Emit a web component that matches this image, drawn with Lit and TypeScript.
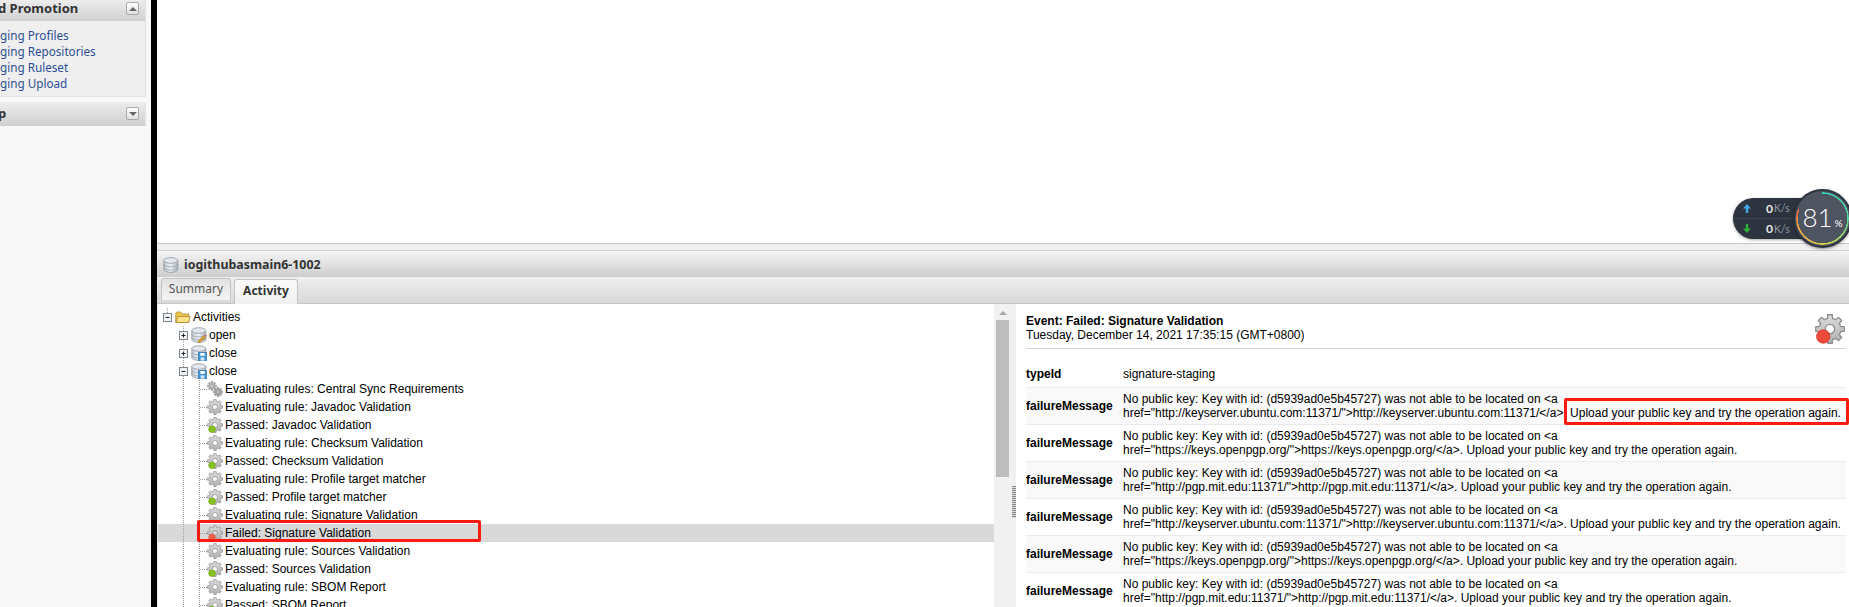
import { LitElement, html, css, svg } from 'lit';
import { customElement } from 'lit/decorators.js';

// gear outline, built from data so both sizes share one shape
function gearPath(cx: number, cy: number, outer: number, root: number, hole: number, teeth = 8) {
  const pts: string[] = [];
  const step = (Math.PI * 2) / teeth;
  for (let i = 0; i < teeth; i++) {
    const a = i * step;
    const corners: [number, number][] = [
      [root, a - step * 0.5],
      [root, a - step * 0.3],
      [outer, a - step * 0.2],
      [outer, a + step * 0.2],
      [root, a + step * 0.3],
    ];
    corners.forEach(([r, t]) => pts.push(`${(cx + r * Math.cos(t)).toFixed(2)} ${(cy + r * Math.sin(t)).toFixed(2)}`));
  }
  const ring = `M${cx - hole} ${cy}a${hole} ${hole} 0 1 0 ${hole * 2} 0a${hole} ${hole} 0 1 0 ${-hole * 2} 0Z`;
  return `M${pts.join('L')}Z${ring}`;
}

const gearDefs = html`
  <svg width="0" height="0" style="position:absolute">
    <defs>
      <linearGradient id="gearFill" x1="0" y1="0" x2="0" y2="1">
        <stop offset="0" stop-color="#dcdcdc"></stop>
        <stop offset="1" stop-color="#b0b0b0"></stop>
      </linearGradient>
      <linearGradient id="dbFill" x1="0" y1="0" x2="1" y2="0">
        <stop offset="0" stop-color="#c4ccd4"></stop>
        <stop offset="0.5" stop-color="#eef1f4"></stop>
        <stop offset="1" stop-color="#aab3bc"></stop>
      </linearGradient>
    </defs>
  </svg>
`;

const gearShape = svg`<path d=${gearPath(8, 8, 7.7, 5.8, 2.5)} fill="url(#gearFill)" fill-rule="evenodd" stroke="#8d8d8d" stroke-width="0.7"></path>`;

function gearIcon(badge?: string) {
  return html`<svg class="icon" width="16" height="16" viewBox="0 0 16 16">
    ${gearShape}
    ${badge ? svg`<circle cx="5" cy="12.2" r="3.5" fill=${badge} stroke-width="0.5" stroke="rgba(0,0,0,.15)"></circle>` : ''}
  </svg>`;
}

const gearsIcon = html`<svg class="icon" width="16" height="16" viewBox="0 0 16 16">
  <path d=${gearPath(5, 5, 4.6, 3.3, 1.3)} fill="#b4b4b4" fill-rule="evenodd" stroke="#858585" stroke-width="0.6"></path>
  <path d=${gearPath(11, 11, 4.6, 3.3, 1.3)} fill="#a8a8a8" fill-rule="evenodd" stroke="#777" stroke-width="0.6"></path>
</svg>`;

const dbShape = svg`
  <path d="M.8 3.5v9c0 1.6 3 2.8 7 2.8s7-1.2 7-2.8v-9z" fill="url(#dbFill)" stroke="#8f99a3" stroke-width="0.8"></path>
  <ellipse cx="7.8" cy="3.5" rx="7" ry="2.8" fill="#e4e8ec" stroke="#8f99a3" stroke-width="0.8"></ellipse>
  <path d="M.8 7c0 1.6 3 2.8 7 2.8s7-1.2 7-2.8M.8 10.2c0 1.6 3 2.8 7 2.8s7-1.2 7-2.8" fill="none" stroke="#8f99a3" stroke-width="0.7"></path>
`;

const dbEdit = html`<svg class="icon" width="16" height="16" viewBox="0 0 16 16">
  ${dbShape}
  <path d="M14.2 7.5l1.5 1.5-6.5 6.2-2.2.6.6-2.2z" fill="#e9a62c" stroke="#8a6420" stroke-width="0.5"></path>
  <path d="M14.2 7.5l1.5 1.5-1 1-1.5-1.5z" fill="#c77fc0"></path>
</svg>`;

const dbSave = html`<svg class="icon" width="16" height="16" viewBox="0 0 16 16">
  ${dbShape}
  <rect x="7.5" y="7.5" width="8" height="8.5" fill="#3f94d6" stroke="#1f6aa8" stroke-width="0.6"></rect>
  <rect x="9.3" y="8" width="4.4" height="2.8" fill="#fff"></rect>
  <rect x="9.6" y="12.4" width="3.8" height="3.2" fill="#d5e8f6"></rect>
</svg>`;

const folderIcon = html`<svg class="icon" width="16" height="16" viewBox="0 0 16 16">
  <path d="M.8 4V13.5h13V5H7L5.6 3H1.8z" fill="#efc74f" stroke="#a8862a" stroke-width="0.8"></path>
  <path d="M2.8 7.5h12.4l-1.6 6H.9z" fill="#fbe28a" stroke="#a8862a" stroke-width="0.8"></path>
</svg>`;

// one 16x18 cell of the tree's guide lines
function cell(kind: 'blank' | 'line' | 'elbow' | 'plus' | 'minus' | 'root') {
  const vLine = kind === 'line' || kind === 'elbow' || kind === 'plus' || kind === 'minus';
  const box = kind === 'plus' || kind === 'minus' || kind === 'root';
  return html`<svg class="cell" width="16" height="18" viewBox="0 0 16 18">
    ${vLine ? svg`<path d="M7.5 0V18" fill="none" stroke="#a0a0a0" stroke-dasharray="1 1"></path>` : ''}
    ${kind === 'root' ? svg`<path d="M7.5 0V5" fill="none" stroke="#a0a0a0" stroke-dasharray="1 1"></path>` : ''}
    ${kind === 'elbow' ? svg`<path d="M8 9.5H16" fill="none" stroke="#a0a0a0" stroke-dasharray="1 1"></path>` : ''}
    ${box ? svg`<rect x="3.5" y="5.5" width="8" height="8" fill="#f2f2f2" stroke="#7b8794"></rect>
      <path d="M5.5 9.5h4" stroke="#223" fill="none"></path>` : ''}
    ${kind === 'plus' ? svg`<path d="M7.5 7.5v4" stroke="#223" fill="none"></path>` : ''}
  </svg>`;
}

const GREEN = '#86c21e';
const RED = '#f4624f';

const ruleNames = ['Javadoc Validation', 'Checksum Validation', 'Profile target matcher', 'Signature Validation'];

const failureLinks = [
  'http://keyserver.ubuntu.com:11371/',
  'https://keys.openpgp.org/',
  'http://pgp.mit.edu:11371/',
  'http://keyserver.ubuntu.com:11371/',
  'https://keys.openpgp.org/',
  'http://pgp.mit.edu:11371/',
];

@customElement('app-root')
export class AppRoot extends LitElement {
  static styles = css`
    :host {
      display: block;
      position: relative;
      width: 1849px;
      height: 607px;
      overflow: hidden;
      background: #fff;
      font-family: 'Liberation Sans', Arial, sans-serif;
      font-size: 12px;
      color: #000;
    }
    .page {
      display: flex;
      height: 607px;
    }

    /* left navigation, scrolled off the left edge */
    .side {
      width: 151px;
      flex: none;
      background: #f8f8f8;
      overflow: hidden;
      font-family: 'Noto Sans', sans-serif;
    }
    .side-panel {
      width: 146px;
      margin-bottom: 5px;
      border-right: 1px solid #e2e2e2;
      box-sizing: border-box;
    }
    .side-head {
      height: 21px;
      display: flex;
      align-items: flex-start;
      justify-content: space-between;
      box-sizing: border-box;
      padding: 2px 6px 0 0;
      background: linear-gradient(#ededed, #cfcfcf);
      font-size: 13px;
      font-weight: 700;
      color: #333;
    }
    .side-head.help {
      height: 24px;
      padding-top: 5px;
    }
    .side-head span {
      margin: -3px 0 0 -2px;
    }
    .toggle {
      width: 13px;
      height: 13px;
      box-sizing: border-box;
      border: 1px solid #aaa;
      border-radius: 2px;
      background: linear-gradient(#fff, #e0e0e0);
      display: flex;
      align-items: center;
      justify-content: center;
    }
    .up,
    .down {
      width: 0;
      height: 0;
      border-left: 4px solid transparent;
      border-right: 4px solid transparent;
    }
    .up {
      border-bottom: 4px solid #666;
    }
    .down {
      border-top: 4px solid #666;
    }
    .side-body {
      height: 76px;
      box-sizing: border-box;
      padding-top: 6px;
      background: #efefef;
      border-bottom: 1px solid #e2e2e2;
    }
    .side-body a {
      display: block;
      height: 16px;
      line-height: 16px;
      font-size: 11.7px;
      color: #2c4f96;
      white-space: nowrap;
    }

    .rail {
      width: 6px;
      flex: none;
      background: #000;
    }

    .main {
      flex: 1;
      min-width: 0;
      display: flex;
      flex-direction: column;
    }
    .canvas {
      height: 243px;
      flex: none;
      background: #fff;
    }
    .split {
      height: 6px;
      flex: none;
      background: #f0f0f0;
      border-top: 1px solid #c8c8c8;
    }
    .title {
      height: 27px;
      flex: none;
      box-sizing: border-box;
      display: flex;
      align-items: center;
      gap: 5px;
      padding-left: 6px;
      border-top: 1px solid #d0d0d0;
      background: linear-gradient(#f5f5f5, #cdcdcd);
      font-family: 'Noto Sans', sans-serif;
      font-size: 12.4px;
      font-weight: 700;
      color: #333;
    }
    .title .icon {
      margin-top: 1px;
    }
    .tabs {
      height: 27px;
      flex: none;
      box-sizing: border-box;
      display: flex;
      align-items: flex-end;
      gap: 3px;
      padding-left: 4px;
      border-bottom: 1px solid #c8c8c8;
      background: linear-gradient(#efefef, #d8d8d8);
      font-family: 'Noto Sans', sans-serif;
      font-size: 12px;
    }
    .tab {
      height: 22px;
      width: 70px;
      margin-bottom: 3px;
      box-sizing: border-box;
      border: 1px solid #c4c4c4;
      border-bottom: 0;
      border-radius: 3px 3px 0 0;
      background: linear-gradient(#e2e2e2, #f4f4f4);
      color: #555;
      line-height: 20px;
      text-align: center;
    }
    .tab.on {
      height: 25px;
      width: 64px;
      margin-bottom: -1px;
      background: linear-gradient(#fafafa, #f0f0f0);
      color: #333;
      font-weight: 700;
      line-height: 22px;
    }

    .panes {
      flex: 1;
      min-height: 0;
      display: flex;
      border-left: 1px solid #eee;
    }
    .tree {
      flex: 1;
      min-width: 0;
      padding: 4px 0 0;
      overflow: hidden;
    }
    .row {
      display: flex;
      align-items: center;
      height: 18px;
      padding-left: 2px;
      white-space: nowrap;
      color: #000;
    }
    .row.sel {
      background: #d9d9d9;
    }
    .cell {
      flex: none;
      display: block;
    }
    .icon {
      flex: none;
      display: block;
    }
    .row .icon {
      margin-left: -1px;
      margin-right: 2px;
    }

    .scroll {
      width: 17px;
      flex: none;
      box-sizing: border-box;
      padding: 7px 2px 0;
      background: #f1f1f1;
    }
    .scroll .up {
      margin: 0 auto 5px;
      border-bottom-color: #a8a8a8;
    }
    .thumb {
      height: 157px;
      background: #bdbdbd;
    }
    .splitter {
      width: 5px;
      flex: none;
      box-sizing: border-box;
      padding-top: 182px;
      background: #f0f0f0;
    }
    .grip {
      width: 4px;
      height: 32px;
      margin-left: 1px;
      background: repeating-linear-gradient(#8a8a8a 0 1px, #d8d8d8 1px 2px);
    }

    .detail {
      width: 833px;
      flex: none;
      box-sizing: border-box;
      padding: 10px 3px 0 10px;
      background: #fff;
      overflow: hidden;
    }
    .event {
      display: flex;
      justify-content: space-between;
      height: 34px;
      border-bottom: 1px solid #d4d4d4;
    }
    .event b,
    .event span {
      display: block;
      line-height: 14px;
    }
    .big-gear {
      margin: 0 1px 0 0;
    }
    .props {
      margin-top: 12px;
    }
    .prop {
      display: flex;
      align-items: center;
      box-sizing: border-box;
      border-bottom: 1px solid #ebebeb;
      padding: 4px 0;
    }
    .prop.type {
      height: 27px;
    }
    .prop.alt {
      background: #f9f9f9;
    }
    .prop b {
      width: 97px;
      flex: none;
    }
    .prop span {
      display: block;
      line-height: 14px;
      white-space: nowrap;
    }

    /* red annotations drawn on top of the screenshot */
    .mark {
      position: absolute;
      box-sizing: border-box;
      border: 3px solid #ff1a10;
      border-radius: 2px;
    }
    .mark.tree-mark {
      left: 197px;
      top: 520px;
      width: 284px;
      height: 22px;
    }
    .mark.msg-mark {
      left: 1564px;
      top: 398px;
      width: 285px;
      height: 27px;
    }

    /* floating network meter */
    .meter {
      position: absolute;
      left: 1733px;
      top: 198px;
      width: 90px;
      height: 41px;
      border-radius: 21px;
      background: #2e343f;
      box-shadow: 0 1px 3px rgba(0, 0, 0, 0.35);
      font-family: Lato, sans-serif;
    }
    .meter-row {
      display: flex;
      align-items: center;
      height: 20px;
      box-sizing: border-box;
      padding-left: 10px;
      color: #e8e8e8;
    }
    .meter-row + .meter-row {
      border-top: 1px solid #3d434f;
    }
    .meter-row svg {
      flex: none;
    }
    .meter-row b {
      margin-left: 15px;
      font-size: 12px;
      width: 7px;
    }
    .meter-row i {
      margin-left: 1px;
      font-style: normal;
      font-size: 10.5px;
      color: #8f96a3;
    }
    .dial {
      position: absolute;
      left: 1793px;
      top: 189px;
      width: 59px;
      height: 59px;
      border-radius: 50%;
      background: #4f5461;
      border: 2px solid #2e343f;
      box-sizing: border-box;
      box-shadow: 0 1px 3px rgba(0, 0, 0, 0.4);
      display: flex;
      align-items: baseline;
      justify-content: center;
      padding-top: 11px;
      font-family: Lato, sans-serif;
      color: #fff;
    }
    .dial .ring {
      position: absolute;
      inset: 1px;
      border-radius: 50%;
      background: conic-gradient(#37d0c2 0deg, #58d69a 90deg, #d9d84a 170deg, #f2a640 250deg, #f0603c 291deg, transparent 291deg);
      -webkit-mask: radial-gradient(closest-side, transparent calc(100% - 2px), #000 calc(100% - 1.6px));
      mask: radial-gradient(closest-side, transparent calc(100% - 2px), #000 calc(100% - 1.6px));
    }
    .dial .num {
      font-size: 26px;
      font-weight: 300;
      line-height: 30px;
    }
    .dial .pct {
      font-size: 10px;
      margin-left: 2px;
    }
  `;

  private leaf(label: string, icon: unknown, sel = false) {
    return html`<div class="row ${sel ? 'sel' : ''}">
      ${cell('blank')}${cell('line')}${cell('elbow')}${icon}<span>${label}</span>
    </div>`;
  }

  private renderTree() {
    return html`
      <div class="row">${cell('root')}${folderIcon}<span>Activities</span></div>
      <div class="row">${cell('blank')}${cell('plus')}${dbEdit}<span>open</span></div>
      <div class="row">${cell('blank')}${cell('plus')}${dbSave}<span>close</span></div>
      <div class="row">${cell('blank')}${cell('minus')}${dbSave}<span>close</span></div>
      ${this.leaf('Evaluating rules: Central Sync Requirements', gearsIcon)}
      ${ruleNames.map(
        (name, i) => html`
          ${this.leaf(`Evaluating rule: ${name}`, gearIcon())}
          ${i < 3 ? this.leaf(`Passed: ${name}`, gearIcon(GREEN)) : ''}
        `
      )}
      ${this.leaf('Failed: Signature Validation', gearIcon(RED), true)}
      ${this.leaf('Evaluating rule: Sources Validation', gearIcon())}
      ${this.leaf('Passed: Sources Validation', gearIcon(GREEN))}
      ${this.leaf('Evaluating rule: SBOM Report', gearIcon())}
      ${this.leaf('Passed: SBOM Report', gearIcon(GREEN))}
    `;
  }

  render() {
    return html`
      ${gearDefs}
      <div class="page">
        <aside class="side">
          <div class="side-panel">
            <div class="side-head">
              <span>d Promotion</span>
              <div class="toggle"><div class="up"></div></div>
            </div>
            <div class="side-body">
              <a>ging Profiles</a>
              <a>ging Repositories</a>
              <a>ging Ruleset</a>
              <a>ging Upload</a>
            </div>
          </div>
          <div class="side-panel">
            <div class="side-head help">
              <span>p</span>
              <div class="toggle"><div class="down"></div></div>
            </div>
          </div>
        </aside>
        <div class="rail"></div>
        <main class="main">
          <div class="canvas"></div>
          <div class="split"></div>
          <div class="title">
            <svg class="icon" width="16" height="16" viewBox="0 0 16 16">${dbShape}</svg>
            iogithubasmain6-1002
          </div>
          <div class="tabs">
            <div class="tab">Summary</div>
            <div class="tab on">Activity</div>
          </div>
          <div class="panes">
            <div class="tree">${this.renderTree()}</div>
            <div class="scroll">
              <div class="up"></div>
              <div class="thumb"></div>
            </div>
            <div class="splitter"><div class="grip"></div></div>
            <section class="detail">
              <header class="event">
                <div>
                  <b>Event: Failed: Signature Validation</b>
                  <span>Tuesday, December 14, 2021 17:35:15 (GMT+0800)</span>
                </div>
                <svg class="big-gear" width="30" height="30" viewBox="0 0 16 16">
                  ${gearShape}
                  <circle cx="4.4" cy="12" r="3.6" fill="#ee4a3a" stroke="#c9382b" stroke-width="0.4"></circle>
                </svg>
              </header>
              <div class="props">
                <div class="prop type"><b>typeId</b><span>signature-staging</span></div>
                ${failureLinks.map(
                  (url, i) => html`
                    <div class="prop ${i % 2 === 0 ? 'alt' : ''}">
                      <b>failureMessage</b>
                      <div>
                        <span>No public key: Key with id: (d5939ad0e5b45727) was not able to be located on &lt;a</span>
                        <span>href="${url}"&gt;${url}&lt;/a&gt;. Upload your public key and try the operation again.</span>
                      </div>
                    </div>
                  `
                )}
              </div>
            </section>
          </div>
        </main>
      </div>

      <div class="mark tree-mark"></div>
      <div class="mark msg-mark"></div>

      <div class="meter">
        <div class="meter-row">
          <svg width="8" height="9" viewBox="0 0 8 9"><path d="M4 0l4 4.5H5.2V9H2.8V4.5H0z" fill="#3fa7e8"></path></svg>
          <b>0</b><i>K/s</i>
        </div>
        <div class="meter-row">
          <svg width="8" height="9" viewBox="0 0 8 9"><path d="M4 9L0 4.5h2.8V0h2.4v4.5H8z" fill="#2fae3c"></path></svg>
          <b>0</b><i>K/s</i>
        </div>
      </div>
      <div class="dial">
        <div class="ring"></div>
        <span class="num">81</span><span class="pct">%</span>
      </div>
    `;
  }
}
